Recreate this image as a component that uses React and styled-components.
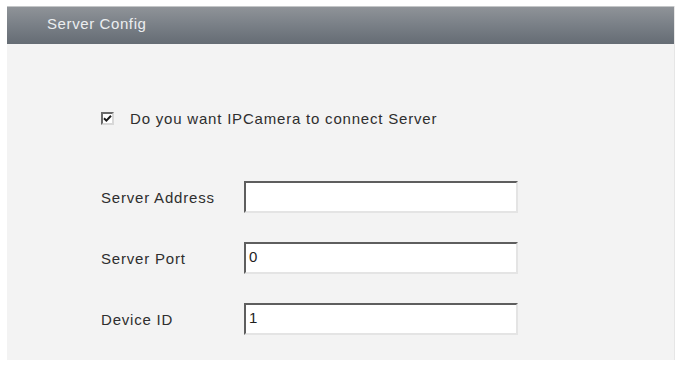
import React from "react";
import styled, { createGlobalStyle } from "styled-components";

const GlobalStyle = createGlobalStyle`
    html, body {
        margin: 0;
        padding: 0;
        background: #ffffff;
    }
    body {
        font-family: "Liberation Sans", Arial, sans-serif;
    }
`;

const fields = [
    { label: "Server Address", value: "" },
    { label: "Server Port", value: "0" },
    { label: "Device ID", value: "1" },
];

const App = () => {
    return (
        <>
            <GlobalStyle />
            <Panel>
                <Header>Server Config</Header>
                <Body>
                    <CheckRow>
                        <CheckBox>
                            <svg width="9" height="9" viewBox="0 0 9 9">
                                <path
                                    d="M1 4.2 L3.4 6.6 L8 1.8"
                                    fill="none"
                                    stroke="#1a1a1a"
                                    strokeWidth="2"
                                />
                            </svg>
                        </CheckBox>
                        <CheckLabel>Do you want IPCamera to connect Server</CheckLabel>
                    </CheckRow>
                    <Form>
                        {fields.map((f) => (
                            <React.Fragment key={f.label}>
                                <Label>{f.label}</Label>
                                <Field>{f.value}</Field>
                            </React.Fragment>
                        ))}
                    </Form>
                </Body>
            </Panel>
        </>
    );
};

export default App;

const Panel = styled.div`
    margin: 6px 0 0 7px;
    width: 667px;
    background: #f3f3f3;
    border-right: 1px solid #e6e6e6;
`;

const Header = styled.div`
    height: 38px;
    display: flex;
    align-items: center;
    padding-left: 40px;
    box-sizing: border-box;
    border-top: 1px solid #c4c6c8;
    background: linear-gradient(to bottom, #8f9398 0%, #7b8188 45%, #656c74 100%);
    color: #eceef0;
    font-size: 15px;
    letter-spacing: 0.6px;
    padding-bottom: 4px;
`;

const Body = styled.div`
    padding: 67px 0 24px 94px;
    height: 316px;
    box-sizing: border-box;
`;

const CheckRow = styled.div`
    display: flex;
    align-items: center;
    gap: 16px;
    height: 14px;
`;

const CheckBox = styled.span`
    width: 9px;
    height: 9px;
    border: 2px solid #6a6a6a;
    border-right-color: #d8d8d8;
    border-bottom-color: #d8d8d8;
    background: #ffffff;
    display: flex;
    align-items: center;
    justify-content: center;
`;

const CheckLabel = styled.span`
    font-size: 15px;
    letter-spacing: 0.8px;
    color: #2e2e2e;
`;

const Form = styled.div`
    margin-top: 56px;
    display: grid;
    grid-template-columns: 143px 274px;
    grid-auto-rows: 32px;
    row-gap: 29px;
    align-items: center;
`;

const Label = styled.span`
    font-size: 15px;
    letter-spacing: 0.8px;
    color: #2e2e2e;
`;

const Field = styled.div`
    height: 32px;
    box-sizing: border-box;
    background: #ffffff;
    border: 2px solid #5e5e5e;
    border-right-color: #e4e4e4;
    border-bottom-color: #e4e4e4;
    padding: 4px 0 0 3px;
    font-size: 15px;
    color: #1e1e1e;
`;
